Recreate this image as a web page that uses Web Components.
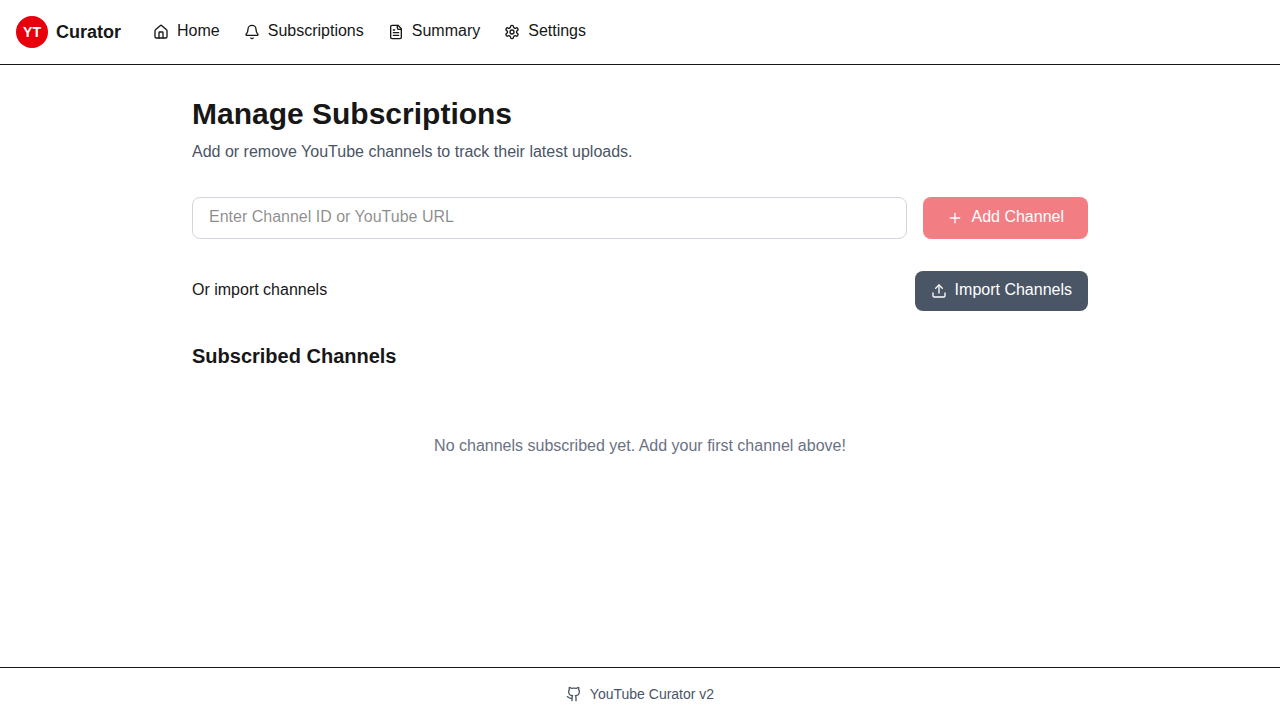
<!DOCTYPE html>
<html lang="en">
<head>
<meta charset="utf-8">
<title>YouTube Curator</title>
<style>
  html, body { margin: 0; height: 100%; }
  body {
    --foreground: #171717;
    --gray-300: #d1d5dc;
    --gray-500: #6a7282;
    --gray-600: #4a5565;
    --red-600: #e7000b;
    background: #fff;
    color: var(--foreground);
    font: 16px/22px "Liberation Sans", Arial, Helvetica, sans-serif;
  }
</style>
</head>
<body>
<curator-app></curator-app>
<script>
const ICONS = {
  house: '<path d="M15 21v-8a1 1 0 0 0-1-1h-4a1 1 0 0 0-1 1v8"/><path d="M3 10a2 2 0 0 1 .709-1.528l7-5.999a2 2 0 0 1 2.582 0l7 5.999A2 2 0 0 1 21 10v9a2 2 0 0 1-2 2H5a2 2 0 0 1-2-2z"/>',
  bell: '<path d="M10.268 21a2 2 0 0 0 3.464 0"/><path d="M3.262 15.326A1 1 0 0 0 4 17h16a1 1 0 0 0 .74-1.673C19.41 13.956 18 12.499 18 8A6 6 0 0 0 6 8c0 4.499-1.411 5.956-2.738 7.326"/>',
  file: '<path d="M15 2H6a2 2 0 0 0-2 2v16a2 2 0 0 0 2 2h12a2 2 0 0 0 2-2V7Z"/><path d="M14 2v4a2 2 0 0 0 2 2h4"/><path d="M10 9H8"/><path d="M16 13H8"/><path d="M16 17H8"/>',
  settings: '<path d="M12.22 2h-.44a2 2 0 0 0-2 2v.18a2 2 0 0 1-1 1.73l-.43.25a2 2 0 0 1-2 0l-.15-.08a2 2 0 0 0-2.73.73l-.22.38a2 2 0 0 0 .73 2.73l.15.1a2 2 0 0 1 1 1.72v.51a2 2 0 0 1-1 1.74l-.15.09a2 2 0 0 0-.73 2.73l.22.38a2 2 0 0 0 2.73.73l.15-.08a2 2 0 0 1 2 0l.43.25a2 2 0 0 1 1 1.73V20a2 2 0 0 0 2 2h.44a2 2 0 0 0 2-2v-.18a2 2 0 0 1 1-1.73l.43-.25a2 2 0 0 1 2 0l.15.08a2 2 0 0 0 2.73-.73l.22-.39a2 2 0 0 0-.73-2.73l-.15-.08a2 2 0 0 1-1-1.74v-.5a2 2 0 0 1 1-1.74l.15-.09a2 2 0 0 0 .73-2.73l-.22-.38a2 2 0 0 0-2.73-.73l-.15.08a2 2 0 0 1-2 0l-.43-.25a2 2 0 0 1-1-1.73V4a2 2 0 0 0-2-2z"/><circle cx="12" cy="12" r="3"/>',
  plus: '<path d="M5 12h14"/><path d="M12 5v14"/>',
  upload: '<path d="M21 15v4a2 2 0 0 1-2 2H5a2 2 0 0 1-2-2v-4"/><polyline points="17 8 12 3 7 8"/><line x1="12" x2="12" y1="3" y2="15"/>',
  github: '<path d="M15 22v-4a4.8 4.8 0 0 0-1-3.5c3 0 6-2 6-5.5.08-1.25-.27-2.48-1-3.5.28-1.15.28-2.35 0-3.5 0 0-1 0-3 1.5-2.64-.5-5.36-.5-8 0C6 2 5 2 5 2c-.3 1.15-.3 2.35 0 3.5A5.403 5.403 0 0 0 4 9c0 3.5 3 5.5 6 5.5-.39.49-.68 1.05-.85 1.65-.17.6-.22 1.23-.15 1.85v4"/><path d="M9 18c-4.51 2-5-2-7-2"/>'
};

function define(name, render) {
  customElements.define(name, class extends HTMLElement {
    constructor() {
      super();
      this.attachShadow({ mode: 'open' });
    }
    connectedCallback() {
      const template = document.createElement('template');
      template.innerHTML = render(this);
      this.shadowRoot.replaceChildren(template.content.cloneNode(true));
    }
  });
}

define('ui-icon', el => `
  <style>
    :host { display: block; width: 16px; height: 16px; flex: none; }
    svg { display: block; }
  </style>
  <svg width="16" height="16" viewBox="0 0 24 24" fill="none" stroke="currentColor" stroke-width="2" stroke-linecap="round" stroke-linejoin="round" aria-hidden="true">${ICONS[el.getAttribute('name')]}</svg>`);

define('nav-link', el => `
  <style>
    :host { display: block; }
    a { display: flex; align-items: center; gap: 8px; color: inherit; text-decoration: none; }
    span { padding-bottom: 2px; }
  </style>
  <a href="#"><ui-icon name="${el.getAttribute('icon')}"></ui-icon><span><slot></slot></span></a>`);

define('brand-logo', () => `
  <style>
    :host { display: flex; align-items: center; gap: 8px; font-weight: 700; font-size: 18px; line-height: 28px; }
    .mark { display: flex; align-items: center; justify-content: center; width: 32px; height: 32px; border-radius: 50%;
            background: var(--red-600); color: #fff; font-size: 14px; line-height: 20px; }
  </style>
  <div class="mark">YT</div><span><slot></slot></span>`);

define('site-header', () => `
  <style>
    :host { display: block; border-bottom: 1px solid var(--foreground); }
    .bar { display: flex; align-items: center; gap: 32px; height: 64px; padding: 0 16px; }
    nav { display: flex; align-items: center; gap: 24px; }
  </style>
  <div class="bar">
    <brand-logo>Curator</brand-logo>
    <nav>
      <nav-link icon="house">Home</nav-link>
      <nav-link icon="bell">Subscriptions</nav-link>
      <nav-link icon="file">Summary</nav-link>
      <nav-link icon="settings">Settings</nav-link>
    </nav>
  </div>`);

define('action-button', el => `
  <style>
    :host { display: flex; }
    button { display: flex; align-items: center; gap: 8px; margin: 0; border: 0; border-radius: 8px;
             padding: 8px 16px; background: var(--gray-600); color: #fff; font: inherit; }
    span { padding-bottom: 2px; }
    :host([variant="primary"]) button { padding: 8px 24px; background: var(--red-600); }
    button:disabled { opacity: .5; }
  </style>
  <button ${el.hasAttribute('disabled') ? 'disabled' : ''}><ui-icon name="${el.getAttribute('icon')}"></ui-icon><span><slot></slot></span></button>`);

define('channel-form', () => `
  <style>
    :host { display: block; }
    form { display: flex; gap: 16px; }
    input { flex: 1; min-width: 0; box-sizing: border-box; height: 42px; margin: 0; padding: 8px 16px 10px;
            border: 1px solid var(--gray-300); border-radius: 8px; background: transparent;
            color: inherit; font: inherit; outline: none; }
    input::placeholder { color: color-mix(in oklab, currentcolor 50%, transparent); opacity: 1; }
  </style>
  <form>
    <input type="text" placeholder="Enter Channel ID or YouTube URL">
    <action-button variant="primary" icon="plus" disabled>Add Channel</action-button>
  </form>`);

define('import-row', () => `
  <style>
    :host { display: flex; align-items: center; justify-content: space-between; }
    span { padding-bottom: 2px; }
  </style>
  <span>Or import channels</span>
  <action-button icon="upload">Import Channels</action-button>`);

define('channel-list', () => `
  <style>
    :host { display: block; }
    h2 { margin: 0 0 16px; padding-bottom: 2px; font-size: 20px; line-height: 26px; font-weight: 700; }
    .empty { padding: 48px 0 50px; text-align: center; color: var(--gray-500); }
  </style>
  <h2>Subscribed Channels</h2>
  <div class="empty">No channels subscribed yet. Add your first channel above!</div>`);

define('subscriptions-page', () => `
  <style>
    :host { display: flex; flex-direction: column; gap: 32px; box-sizing: border-box; width: 896px; margin: 0 auto; padding: 32px 0; }
    h1 { margin: 0 0 8px; padding-bottom: 2px; font-size: 30px; line-height: 34px; font-weight: 700; }
    p { margin: 0; padding-bottom: 2px; color: var(--gray-600); }
  </style>
  <header>
    <h1>Manage Subscriptions</h1>
    <p>Add or remove YouTube channels to track their latest uploads.</p>
  </header>
  <channel-form></channel-form>
  <import-row></import-row>
  <channel-list></channel-list>`);

define('site-footer', () => `
  <style>
    :host { display: flex; align-items: center; justify-content: center; gap: 8px; padding: 16px;
            border-top: 1px solid var(--foreground); color: var(--gray-600); font-size: 14px; line-height: 20px; }
  </style>
  <ui-icon name="github"></ui-icon><span>YouTube Curator v2</span>`);

define('curator-app', () => `
  <style>
    :host { display: flex; flex-direction: column; min-height: 100vh; }
    main { flex: 1; }
  </style>
  <site-header></site-header>
  <main><subscriptions-page></subscriptions-page></main>
  <site-footer></site-footer>`);
</script>
</body>
</html>
